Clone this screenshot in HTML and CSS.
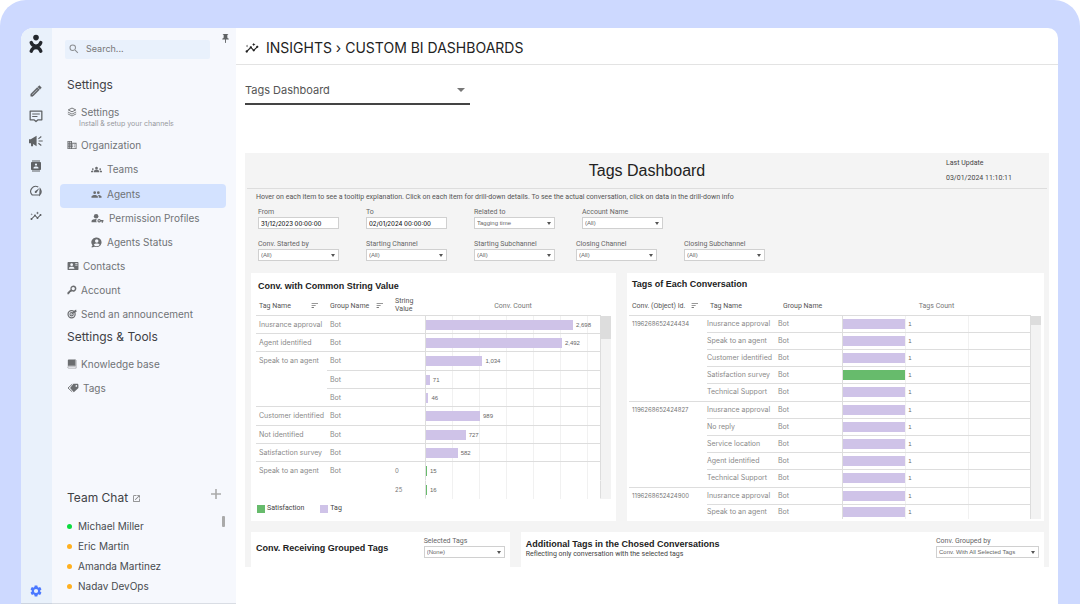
FILE: index.html
```html
<!DOCTYPE html>
<html lang="en">
<head>
<meta charset="utf-8">
<meta name="viewport" content="width=device-width, initial-scale=1">
<title>Insights › Custom BI Dashboards</title>
<link rel="stylesheet" href="styles.css">
</head>
<body>
<svg class="sprite" aria-hidden="true">
  <symbol id="insights" viewBox="0 0 24 24"><path d="M21 8c-1.45 0-2.26 1.44-1.93 2.51l-3.55 3.56c-.3-.09-.74-.09-1.04 0l-2.55-2.55C12.27 10.45 11.46 9 10 9c-1.45 0-2.27 1.44-1.93 2.52l-4.56 4.55C2.44 15.74 1 16.55 1 18c0 1.1.9 2 2 2 1.45 0 2.26-1.44 1.93-2.51l4.55-4.56c.3.09.74.09 1.04 0l2.55 2.55C12.73 16.55 13.54 18 15 18c1.45 0 2.27-1.44 1.93-2.52l3.56-3.55C21.56 12.26 23 11.45 23 10c0-1.1-.9-2-2-2zM15 9l.94-2.07L18 6l-2.06-.93L15 3l-.92 2.07L12 6l2.08.93zM3.5 11L4 9l2-.5L4 8l-.5-2L3 8l-2 .5L3 9z"/></symbol>
  <symbol id="sort" viewBox="0 0 12 12"><path d="M1 1.5h11v1.6H1zM1 5h7v1.6H1zM1 8.500h4v1.600H1z"/></symbol>
</svg>
<div class="frame">
  <div class="app">
    <nav class="rail" aria-label="Main">
      <a class="logo" href="#" aria-label="Home"><svg viewBox="0 0 14 20"><circle cx="7" cy="3.600" r="2.800"/><path d="M2.200 8.600c.8 2.600 2.500 3.600 4.800 3.600s4-1 4.800-3.600M2.200 17.200c.8-2.600 2.500-3.600 4.800-3.600s4 1 4.800 3.600" fill="none" stroke="#23272d" stroke-width="3.400" stroke-linecap="round"/></svg></a>
      <a href="#" aria-label="Compose"><svg viewBox="0 0 24 24"><path d="M14.060 9.020l.92.92L5.920 19H5v-.92l9.060-9.060M17.660 3c-.25 0-.51.1-.7.29l-1.830 1.830 3.750 3.750 1.830-1.830c.39-.39.39-1.020 0-1.410l-2.340-2.340c-.2-.2-.45-.29-.71-.29zm-3.600 3.190L3 17.250V21h3.750L17.810 9.940l-3.750-3.750z" stroke="#5f6265" stroke-width=".8"/></svg></a>
      <a href="#" aria-label="Chats"><svg viewBox="0 0 24 24"><path d="M2 3.500h20v15h-6.500L12 21.500l-3.500-3H2z" fill="none" stroke="#5f6265" stroke-width="2.200" stroke-linejoin="round"/><path d="M5.500 7.500h13v1.800h-13zM5.500 12h9v1.800h-9z"/></svg></a>
      <a href="#" aria-label="Campaigns"><svg viewBox="0 0 24 24"><path d="M0 9h3l10-6v18l-6-4v4H3.500v-5H0zM16.500 11h7v2h-7zM15.500 7.500l5-4 1.200 1.500-5 4zM15.500 16.500l5 4 1.200-1.500-5-4z"/></svg></a>
      <a href="#" aria-label="Contacts"><svg class="small" viewBox="0 0 24 24"><path d="M20 1H4v2h16zM4 23h16v-2H4zM20 4H4c-1.100 0-2 .9-2 2v12c0 1.100.9 2 2 2h16c1.100 0 2-.9 2-2V6c0-1.100-.9-2-2-2zm-8 2.750a2.250 2.250 0 1 1 0 4.500 2.250 2.250 0 0 1 0-4.500zM17 17H7v-1.500c0-1.670 3.330-2.500 5-2.500s5 .83 5 2.500z"/></svg></a>
      <a href="#" aria-label="Performance"><svg class="small" viewBox="0 0 24 24"><path d="M4.500 20A10 10 0 0 1 16.500 4.200M20.300 7.500A10 10 0 0 1 19.500 20z" fill="none" stroke="#5f6265" stroke-width="2.200"/><path d="M4 18.900h16V21H4zM19 6l-9 6.500a2.100 2.100 0 0 0 3 3z"/></svg></a>
      <a href="#" aria-label="Insights"><svg class="small"><use href="#insights"/></svg></a>
      <a class="gear" href="#" aria-label="Settings"><svg viewBox="0 0 24 24"><path d="M19.140 12.940c.04-.3.06-.61.06-.94 0-.32-.02-.64-.07-.94l2.030-1.580c.18-.14.23-.41.12-.61l-1.920-3.320c-.12-.22-.37-.29-.59-.22l-2.390.96c-.5-.38-1.030-.7-1.620-.94l-.36-2.540c-.04-.24-.24-.41-.48-.41h-3.840c-.24 0-.43.17-.47.41l-.36 2.540c-.59.24-1.130.57-1.620.94l-2.390-.96c-.22-.08-.47 0-.59.22L2.740 8.870c-.12.21-.08.47.12.61l2.030 1.580c-.05.3-.09.63-.09.94s.02.64.07.94l-2.030 1.580c-.18.14-.23.41-.12.61l1.920 3.320c.12.22.37.29.59.22l2.390-.96c.5.38 1.030.7 1.620.94l.36 2.540c.05.24.24.41.48.41h3.840c.24 0 .44-.17.47-.41l.36-2.540c.59-.24 1.130-.56 1.620-.94l2.390.96c.22.08.47 0 .59-.22l1.920-3.320c.12-.22.07-.47-.12-.61l-2.010-1.580zM12 15.600a3.600 3.600 0 1 1 0-7.200 3.600 3.600 0 0 1 0 7.200z"/></svg></a>
    </nav>

    <aside class="sidebar">
      <button class="pin" aria-label="Pin menu"><svg viewBox="0 0 24 24"><path d="M16 9V4h1c.55 0 1-.45 1-1s-.45-1-1-1H7c-.55 0-1 .45-1 1s.45 1 1 1h1v5c0 1.660-1.340 3-3 3v2h5.970v7l1 1 1-1v-7H19v-2c-1.660 0-3-1.340-3-3z"/></svg></button>
      <label class="search"><svg viewBox="0 0 24 24"><path d="M15.500 14h-.79l-.28-.27A6.470 6.470 0 0 0 16 9.500 6.500 6.500 0 1 0 9.500 16c1.610 0 3.090-.59 4.230-1.570l.27.28v.79l5 4.990L20.490 19l-4.990-5zm-6 0a4.500 4.500 0 1 1 0-9 4.500 4.500 0 0 1 0 9z"/></svg><input type="text" placeholder="Search..." aria-label="Search"></label>
      <h2 class="heading first">Settings</h2>
      <nav class="menu" aria-label="Settings">
        <a class="item" href="#"><svg viewBox="0 0 24 24"><path d="M12 2.500L3 7l9 4.500L21 7z" fill="none" stroke="#6b6d70" stroke-width="2.200"/><path d="M2 12l10 5 10-5M2 16.500l10 5 10-5" fill="none" stroke="#6b6d70" stroke-width="2"/></svg>Settings</a>
        <small class="hint">Install &amp; setup your channels</small>
        <a class="item" href="#"><svg viewBox="1 2 22 20"><path d="M12 7V3H2v18h20V7zM6 19H4v-2h2zm0-4H4v-2h2zm0-4H4V9h2zm0-4H4V5h2zm4 12H8v-2h2zm0-4H8v-2h2zm0-4H8V9h2zm0-4H8V5h2zm10 12h-8v-2h2v-2h-2v-2h2v-2h-2V9h8zm-2-8h-2v2h2zm0 4h-2v2h2z"/></svg>Organization</a>
        <a class="item sub" href="#"><svg viewBox="0 0 24 24"><path d="M4 13a2 2 0 1 0 0-4 2 2 0 0 0 0 4zm1.130 1.100A7 7 0 0 0 1.220 14.580C.48 14.900 0 15.620 0 16.430V18h4.500v-1.610c0-.83.23-1.610.63-2.290zM20 13a2 2 0 1 0 0-4 2 2 0 0 0 0 4zm4 3.430c0-.81-.48-1.530-1.220-1.850A7 7 0 0 0 18.870 14.100c.4.68.63 1.460.63 2.290V18H24zm-7.760-2.780c-1.170-.52-2.610-.9-4.240-.9s-3.070.39-4.240.9A3 3 0 0 0 6 16.390V18h12v-1.610a3 3 0 0 0-1.760-2.740zM9 9a3 3 0 1 0 6 0 3 3 0 0 0-6 0z"/></svg>Teams</a>
        <a class="item sub active" href="#" aria-current="page"><svg viewBox="0 0 24 24"><path d="M16 11a3 3 0 1 0 0-6 3 3 0 0 0 0 6zm-8 0a3 3 0 1 0 0-6 3 3 0 0 0 0 6zm0 2c-2.330 0-7 1.170-7 3.500V19h14v-2.500c0-2.330-4.670-3.500-7-3.500zm8 0l-.97.05c1.160.84 1.970 1.970 1.970 3.450V19h6v-2.500c0-2.330-4.670-3.500-7-3.500z"/></svg>Agents</a>
        <a class="item sub" href="#"><svg class="wide" viewBox="0 0 28 24"><circle cx="11" cy="7" r="5"/><path d="M1 20v-2.500C1 14.500 6 13 11 13l1.500.1c-1.800 2.200-1.800 5 0 6.900z"/><path d="M17.500 13a3.800 3.800 0 0 1 3.600 2.500H27v2.800h-1.200V21h-2.600v-2.700h-2.100A3.800 3.800 0 1 1 17.500 13zm0 2.400a1.400 1.400 0 1 0 0 2.800 1.400 1.400 0 0 0 0-2.800z"/></svg>Permission Profiles</a>
        <a class="item sub" href="#"><svg viewBox="0 0 24 24"><path fill-rule="evenodd" d="M12.500 1a10.500 10.500 0 1 1-4 20.200L1.500 23v-3l2-1.500A10.500 10.500 0 0 1 12.500 1zm0 4a3.800 3.800 0 1 0 0 7.600 3.800 3.800 0 0 0 0-7.600zm-6.500 12a8 8 0 0 0 13 0c-1-2-4-3-6.500-3s-5.500 1-6.500 3z"/></svg>Agents Status</a>
        <a class="item" href="#"><svg class="card-icon" viewBox="0 1 24 22"><path fill-rule="evenodd" d="M2 3h20c1.100 0 2 .9 2 2v14c0 1.100-.9 2-2 2H2c-1.100 0-2-.9-2-2V5c0-1.100.9-2 2-2zm7 3a3 3 0 1 0 0 6 3 3 0 0 0 0-6zM3 18h12v-1c0-2-4-3.100-6-3.100S3 15 3 17zM17 6h5v1.500h-5zM17 9.500h5V11h-5z"/></svg>Contacts</a>
        <a class="item" href="#"><svg viewBox="0 0 24 24"><path fill-rule="evenodd" d="M15 1a7.500 7.500 0 1 1-3.400 14.200L10 17H7.500v2.500H5V22H1v-4l7.500-7.500A7.500 7.500 0 0 1 15 1zm0 3.500a4 4 0 1 0 0 8 4 4 0 0 0 0-8z"/></svg>Account</a>
        <a class="item" href="#"><svg viewBox="0 0 24 24"><circle cx="11" cy="12.500" r="8.500" fill="none" stroke="#6b6d70" stroke-width="3"/><circle cx="11" cy="12.500" r="4" fill="none" stroke="#6b6d70" stroke-width="2.500"/><path d="M10 12l7-8 5-3v3l2 1-3 3-4 1-6 5z"/></svg>Send an announcement</a>
        <h2 class="heading">Settings &amp; Tools</h2>
        <a class="item" href="#"><svg viewBox="0 0 24 24"><path d="M4 1h16v15H4a2 2 0 0 0-2 1V3a2 2 0 0 1 2-2z"/><path d="M20 1.500l2 2V22H4a2 2 0 0 1 0-4.500h16z" fill="none" stroke="#8d8f92" stroke-width="1.500"/></svg>Knowledge base</a>
        <a class="item" href="#"><svg class="wide" viewBox="0 0 28 24"><path fill-rule="evenodd" d="M15 2h9c1.500 0 3 1 3 3v7L16 22 7 12zm7 3a2 2 0 1 0 0 4 2 2 0 0 0 0-4z"/><path d="M12 3L2 12l10 9" fill="none" stroke="#6b6d70" stroke-width="2.200"/></svg>Tags</a>
      </nav>
      <section class="chat">
        <header class="chat-head">
          <h2 class="heading">Team Chat</h2>
          <svg viewBox="0 0 24 24"><path d="M19 19H5V5h7V3H5a2 2 0 0 0-2 2v14a2 2 0 0 0 2 2h14a2 2 0 0 0 2-2v-7h-2zM14 3v2h3.590l-9.830 9.830 1.410 1.410L19 6.410V10h2V3z"/></svg>
          <button class="plus" aria-label="Add chat"><svg viewBox="0 0 12 12"><path d="M5.200 1h1.600v4.200H11v1.600H6.800V11H5.200V6.800H1V5.200h4.200z"/></svg></button>
        </header>
        <ul class="people">
          <li class="online">Michael Miller</li>
          <li>Eric Martin</li>
          <li>Amanda Martinez</li>
          <li>Nadav DevOps</li>
        </ul>
      </section>
    </aside>

    <main class="main">
      <header class="topbar"><svg><use href="#insights"/></svg><h1>INSIGHTS › CUSTOM BI DASHBOARDS</h1></header>
      <div class="picker"><select aria-label="Dashboard"><option>Tags Dashboard</option></select></div>

      <section class="board">
        <header class="board-head">
          <span></span>
          <h2>Tags Dashboard</h2>
          <p>Last Update<br>03/01/2024 11:10:11</p>
        </header>
        <p class="note">Hover on each item to see a tooltip explanation. Click on each item for drill-down details. To see the actual conversation, click on data in the drill-down info</p>
        <form class="filters">
          <div class="filter-row">
            <label class="field">From<input type="text" value="31/12/2023 00:00:00"></label>
            <label class="field">To<input type="text" value="02/01/2024 00:00:00"></label>
            <label class="field">Related to<span class="drop"><select><option>Tagging time</option></select></span></label>
            <label class="field">Account Name<span class="drop"><select><option>(All)</option></select></span></label>
          </div>
          <div class="filter-row split">
            <div class="filter-row">
              <label class="field">Conv. Started by<span class="drop"><select><option>(All)</option></select></span></label>
              <label class="field">Starting Channel<span class="drop"><select><option>(All)</option></select></span></label>
              <label class="field">Starting Subchannel<span class="drop"><select><option>(All)</option></select></span></label>
            </div>
            <div class="filter-row">
              <label class="field">Closing Channel<span class="drop"><select><option>(All)</option></select></span></label>
              <label class="field">Closing Subchannel<span class="drop"><select><option>(All)</option></select></span></label>
            </div>
          </div>
        </form>

        <div class="cards">
          <article class="card strings">
            <h3>Conv. with Common String Value</h3>
            <div class="pane">
              <table>
                <colgroup><col class="c-tag"><col class="c-group"><col class="c-value"><col></colgroup>
                <thead><tr><th><span class="sortable">Tag Name<svg><use href="#sort"/></svg></span></th><th><span class="sortable">Group Name<svg><use href="#sort"/></svg></span></th><th class="two-line">String<br>Value</th><th class="measure">Conv. Count</th></tr></thead>
                <tbody>
                  <tr><td>Inusrance approval</td><td>Bot</td><td></td><td class="plot"><div class="bar"><i style="width:84.500%"></i>2,698</div></td></tr>
                  <tr><td>Agent identified</td><td>Bot</td><td></td><td class="plot"><div class="bar"><i style="width:78.100%"></i>2,492</div></td></tr>
                  <tr><td rowspan="3">Speak to an agent</td><td>Bot</td><td></td><td class="plot"><div class="bar"><i style="width:32.400%"></i>1,034</div></td></tr>
                  <tr><td>Bot</td><td></td><td class="plot"><div class="bar"><i style="width:2.200%"></i>71</div></td></tr>
                  <tr><td>Bot</td><td></td><td class="plot"><div class="bar"><i style="width:1.400%"></i>46</div></td></tr>
                  <tr><td>Customer identified</td><td>Bot</td><td></td><td class="plot"><div class="bar"><i style="width:31%"></i>989</div></td></tr>
                  <tr><td>Not identified</td><td>Bot</td><td></td><td class="plot"><div class="bar"><i style="width:22.800%"></i>727</div></td></tr>
                  <tr><td>Satisfaction survey</td><td>Bot</td><td></td><td class="plot"><div class="bar"><i style="width:18.200%"></i>582</div></td></tr>
                  <tr class="open"><td rowspan="2">Speak to an agent</td><td>Bot</td><td class="num">0</td><td class="plot"><div class="bar good"><i style="width:.5%"></i>15</div></td></tr>
                  <tr class="open"><td></td><td class="num">25</td><td class="plot"><div class="bar good"><i style="width:.5%"></i>16</div></td></tr>
                </tbody>
              </table>
              <div class="scroll"></div>
            </div>
            <ul class="legend"><li class="good">Satisfaction</li><li>Tag</li></ul>
          </article>

          <article class="card convs">
            <h3>Tags of Each Conversation</h3>
            <div class="pane">
              <table>
                <colgroup><col class="c-id"><col class="c-name"><col class="c-bot"><col></colgroup>
                <thead><tr><th><span class="sortable">Conv. (Object) Id.<svg><use href="#sort"/></svg></span></th><th>Tag Name</th><th>Group Name</th><th class="measure">Tags Count</th></tr></thead>
                <tbody>
                  <tr><td class="num" rowspan="5">1196268652424434</td><td>Inusrance approval</td><td>Bot</td><td class="plot"><div class="bar"><i style="width:33.300%"></i>1</div></td></tr>
                  <tr><td>Speak to an agent</td><td>Bot</td><td class="plot"><div class="bar"><i style="width:33.300%"></i>1</div></td></tr>
                  <tr><td>Customer identified</td><td>Bot</td><td class="plot"><div class="bar"><i style="width:33.300%"></i>1</div></td></tr>
                  <tr><td>Satisfaction survey</td><td>Bot</td><td class="plot"><div class="bar good"><i style="width:33.300%"></i>1</div></td></tr>
                  <tr><td>Technical Support</td><td>Bot</td><td class="plot"><div class="bar"><i style="width:33.300%"></i>1</div></td></tr>
                  <tr><td class="num" rowspan="5">1196268652424827</td><td>Inusrance approval</td><td>Bot</td><td class="plot"><div class="bar"><i style="width:33.300%"></i>1</div></td></tr>
                  <tr><td>No reply</td><td>Bot</td><td class="plot"><div class="bar"><i style="width:33.300%"></i>1</div></td></tr>
                  <tr><td>Service location</td><td>Bot</td><td class="plot"><div class="bar"><i style="width:33.300%"></i>1</div></td></tr>
                  <tr><td>Agent identified</td><td>Bot</td><td class="plot"><div class="bar"><i style="width:33.300%"></i>1</div></td></tr>
                  <tr><td>Technical Support</td><td>Bot</td><td class="plot"><div class="bar"><i style="width:33.300%"></i>1</div></td></tr>
                  <tr><td class="num open" rowspan="2">1196268652424900</td><td>Inusrance approval</td><td>Bot</td><td class="plot"><div class="bar"><i style="width:33.300%"></i>1</div></td></tr>
                  <tr class="last"><td>Speak to an agent</td><td>Bot</td><td class="plot"><div class="bar"><i style="width:33.300%"></i>1</div></td></tr>
                </tbody>
              </table>
              <div class="scroll"></div>
            </div>
          </article>
        </div>

        <div class="cards lower">
          <article class="card row">
            <h3>Conv. Receiving Grouped Tags</h3>
            <label class="field">Selected Tags<span class="drop"><select><option>(None)</option></select></span></label>
          </article>
          <article class="card row">
            <div><h3>Additional Tags in the Chosed Conversations</h3><p>Reflecting only conversation with the selected tags</p></div>
            <label class="field long">Conv. Grouped by<span class="drop"><select><option>Conv. With All Selected Tags</option></select></span></label>
          </article>
        </div>
      </section>
    </main>
  </div>
</div>
</body>
</html>
```
FILE: styles.css
```css
* { box-sizing: border-box; margin: 0; padding: 0; }
body { background: #fff; color: #555; font: 11px/20px Inter, "Open Sans", sans-serif; }
h1, h2, h3 { font-weight: 400; }
ul { list-style: none; }
a { color: inherit; text-decoration: none; }
button { border: 0; background: none; cursor: pointer; }
input, select { font: inherit; color: inherit; border: 0; border-radius: 0; outline: 0; appearance: none; min-width: 0; }
svg { display: block; flex: none; fill: #5f6265; }
.sprite { position: absolute; width: 0; height: 0; }

.frame { display: flex; min-height: 100vh; padding: 28px 22px 0 21px; background: #cdd9ff; border-radius: 26px 26px 0 0; }
.app { display: flex; flex: 1; min-width: 0; background: #fff; border-radius: 12px 10px 0 0; overflow: hidden; }

.rail { display: flex; flex-direction: column; align-items: center; gap: 11px; width: 31px; padding: 6px 1px 5px 0; background: #e9f1fb; border-bottom: 1px solid #ccd4e0; }
.rail svg { width: 14px; height: 14px; }
.rail svg.small { width: 12px; margin: 0 1px; }
.rail .logo { margin-bottom: 19px; }
.rail .logo svg { width: 14px; height: 20px; fill: #23272d; }
.rail .gear { margin-top: auto; }
.rail .gear svg { fill: #4a78ff; }

.sidebar { position: relative; display: flex; flex-direction: column; width: 184px; padding: 12px 10px 7px 8px; background: #f6f8fd; border-bottom: 1px solid #d9dde4; }
.pin { position: absolute; top: 5px; right: 5px; }
.pin svg { width: 11px; height: 11px; }
.search { display: flex; align-items: center; gap: 6px; height: 19px; margin: 0 16px 0 5px; padding: 0 3px 1px; background: #e9f1fc; border-radius: 2px; }
.search svg { width: 12px; height: 12px; fill: #8b8e92; }
.search input { flex: 1; height: 16px; background: none; font-size: 9px; }
.search input::placeholder { color: #777; opacity: 1; }
.heading { padding-left: 7px; color: #3f4246; font-size: 12px; line-height: 20px; }
.heading.first { margin: 16px 0 7px; }
.menu { display: flex; flex-direction: column; gap: 4px; }
.menu .heading { margin: -1px 0 3px; }
.item { display: flex; align-items: center; gap: 4px; padding-left: 7px; color: #707376; font-size: 10px; line-height: 20px; }
.item svg { width: 10px; height: 10px; fill: #6b6d70; }
.item svg.wide, .item svg.card-icon { width: 12px; }
.sub { gap: 5px; padding-left: 31px; }
.sub svg { width: 11px; height: 11px; }
.sub svg.wide { width: 13px; }
.active { margin: 1px 0 -4px; padding-bottom: 4px; background: #d3e2ff; border-radius: 4px; }
.hint { margin: -6px 0 3px; padding-left: 19px; color: #96999d; font-size: 7px; line-height: 8px; }
.chat { position: relative; margin-top: auto; }
.chat-head { display: flex; align-items: center; gap: 4px; margin-bottom: 8px; }
.chat-head > svg { width: 9px; height: 9px; fill: #777; }
.plus { margin: -8px 4px 0 auto; }
.plus svg { width: 12px; height: 12px; fill: #aaa; }
.people { padding-left: 7px; color: #484b4f; font-size: 10px; }
.people li { display: flex; align-items: center; gap: 6px; }
.people li::before { content: ""; width: 5px; height: 5px; border-radius: 50%; background: #ffb01f; }
.people .online::before { background: #0bdc3f; }
.people::after { content: ""; position: absolute; top: 28px; right: 1px; width: 3px; height: 11px; border-radius: 1px; background: #aaa; }

.main { flex: 1; min-width: 0; }
.topbar { display: flex; align-items: center; gap: 7px; height: 37px; padding: 3px 9px 0; border-bottom: 1px solid #e3e3e3; }
.topbar svg { width: 14px; height: 14px; fill: #222; }
.topbar h1 { color: #222; font-size: 14px; line-height: 20px; }
.picker { position: relative; width: 225px; margin: 12px 9px 48px; border-bottom: 2px solid #444; }
.picker select { width: 100%; height: 26px; background: none; font-size: 11px; }
.picker::after { content: ""; position: absolute; top: 11px; right: 5px; border: 4px solid transparent; border-top-color: #777; border-bottom: 0; }

.board { margin: 0 9px; background: #f4f4f4; font: 7px/11px Roboto, Arial, sans-serif; color: #666; }
.board-head { display: grid; grid-template-columns: 1fr auto 1fr; align-items: center; height: 36px; margin: 0 2px; border-bottom: 1px solid #ddd; }
.board-head h2 { color: #222; font: 16px/20px "Liberation Sans", Arial, sans-serif; }
.board-head p { justify-self: end; width: 101px; color: #444; line-height: 15px; }
.note { padding: 3px 11px 0; color: #555; }
.filters { display: flex; flex-direction: column; gap: 10px; padding: 4px 13px 12px; }
.filter-row { display: flex; gap: 27px; }
.filter-row.split { gap: 21px; }
.field { display: flex; flex-direction: column; width: 81px; line-height: 10px; }
.field.long { width: 103px; }
.field input, .field select { width: 100%; height: 12px; padding: 0 2px; border: 1px solid #d0d0d0; background: #fff; font-size: 6px; line-height: 10px; }
.field select { font-family: "Liberation Sans", Arial, sans-serif; }
.field input { color: #222; font-family: Inter, sans-serif; font-weight: 500; }
.drop { position: relative; display: block; height: 12px; }
.drop select { display: block; }
.drop::after { content: ""; position: absolute; top: 5px; right: 4px; border: 2px solid transparent; border-top: 3px solid #555; border-bottom: 0; }

.cards { display: grid; grid-template-columns: 365fr 417fr; gap: 11px; padding: 0 5px 11px 6px; }
.cards.lower { grid-template-columns: 259fr 524fr; padding-bottom: 0; }
.card { min-width: 0; background: #fff; }
.card h3 { color: #222; font: 700 9px/11px "Liberation Sans", Arial, sans-serif; }
.strings { padding: 8px 5px 0; }
.strings h3 { margin: 0 2px 1px; }
.convs { padding: 6px 3px 0 2px; }
.convs h3 { margin: 0 3px 3px; }
.pane { display: flex; }
table { flex: 1; min-width: 0; table-layout: fixed; border-spacing: 0; }
.c-tag { width: 71px; }
.c-group { width: 65px; }
.c-value { width: 33px; }
.c-id { width: 78px; }
.c-name { width: 68px; }
.c-bot { width: 67px; }
th { height: 23px; padding: 3px 3px 0; border-bottom: 1px solid #ddd; color: #555; font-weight: 400; text-align: left; line-height: 8px; white-space: nowrap; }
th.two-line { padding-top: 1px; }
th.measure { color: #777; text-align: center; }
.sortable { display: flex; align-items: center; justify-content: space-between; padding-right: 6px; }
.sortable svg { width: 7px; height: 7px; fill: #777; }
td { height: 18px; padding: 0 3px; border-bottom: 1px solid #ddd; color: #8a8a8a; font: 7px/18px Inter, sans-serif; white-space: nowrap; vertical-align: top; line-height: 17px; }
td.num { color: #777; font-size: 6px; }
.strings tr:nth-child(3n) td { height: 19px; }
.strings .open td, td.open { border-bottom-color: transparent; }
.convs tbody td { height: 17px; line-height: 16px; }
.convs tbody tr:nth-child(5n) td { height: 18px; }
.convs tbody .last td { height: 14px; border-bottom: 0; line-height: 14px; }
.convs td:nth-last-child(3) { padding: 0; }
.convs th:nth-child(3) { padding-left: 8px; }
td.plot { padding: 0; border-left: 1px solid #ddd; border-right: 1px solid #ddd; background: repeating-linear-gradient(90deg, transparent 0 26px, #f1f1f1 26px 27px); }
.convs td.plot { background: repeating-linear-gradient(90deg, transparent 0 62px, #f1f1f1 62px 63px); }
.bar { display: flex; align-items: center; gap: 3px; height: 17px; color: #666; font: 6px/8px "Liberation Sans", Arial, sans-serif; }
.convs .bar { height: 16px; }
.convs .last .bar { height: 14px; }
.bar i { flex: none; min-width: 1px; height: 10px; background: #cfc3e8; }
.bar.good i { background: #67bb6c; }
.scroll { width: 10px; margin-top: 23px; background: linear-gradient(#ddd, #ddd) top / 100% 23px no-repeat #f3f3f3; }
.convs .scroll { background-size: 100% 9px; }
.legend { display: flex; gap: 16px; padding: 4px 1px 7px; }
.legend li { display: flex; align-items: center; gap: 2px; color: #444; }
.legend li::before { content: ""; width: 8px; height: 8px; background: #cfc3e8; }
.legend .good::before { background: #67bb6c; }
.card.row { display: flex; align-items: flex-start; justify-content: space-between; min-height: 35px; padding: 4px 5px; }
.card.row > h3 { padding-top: 7px; }
.card.row > div { padding-top: 3px; }
.card.row p { color: #444; line-height: 8px; }
```
